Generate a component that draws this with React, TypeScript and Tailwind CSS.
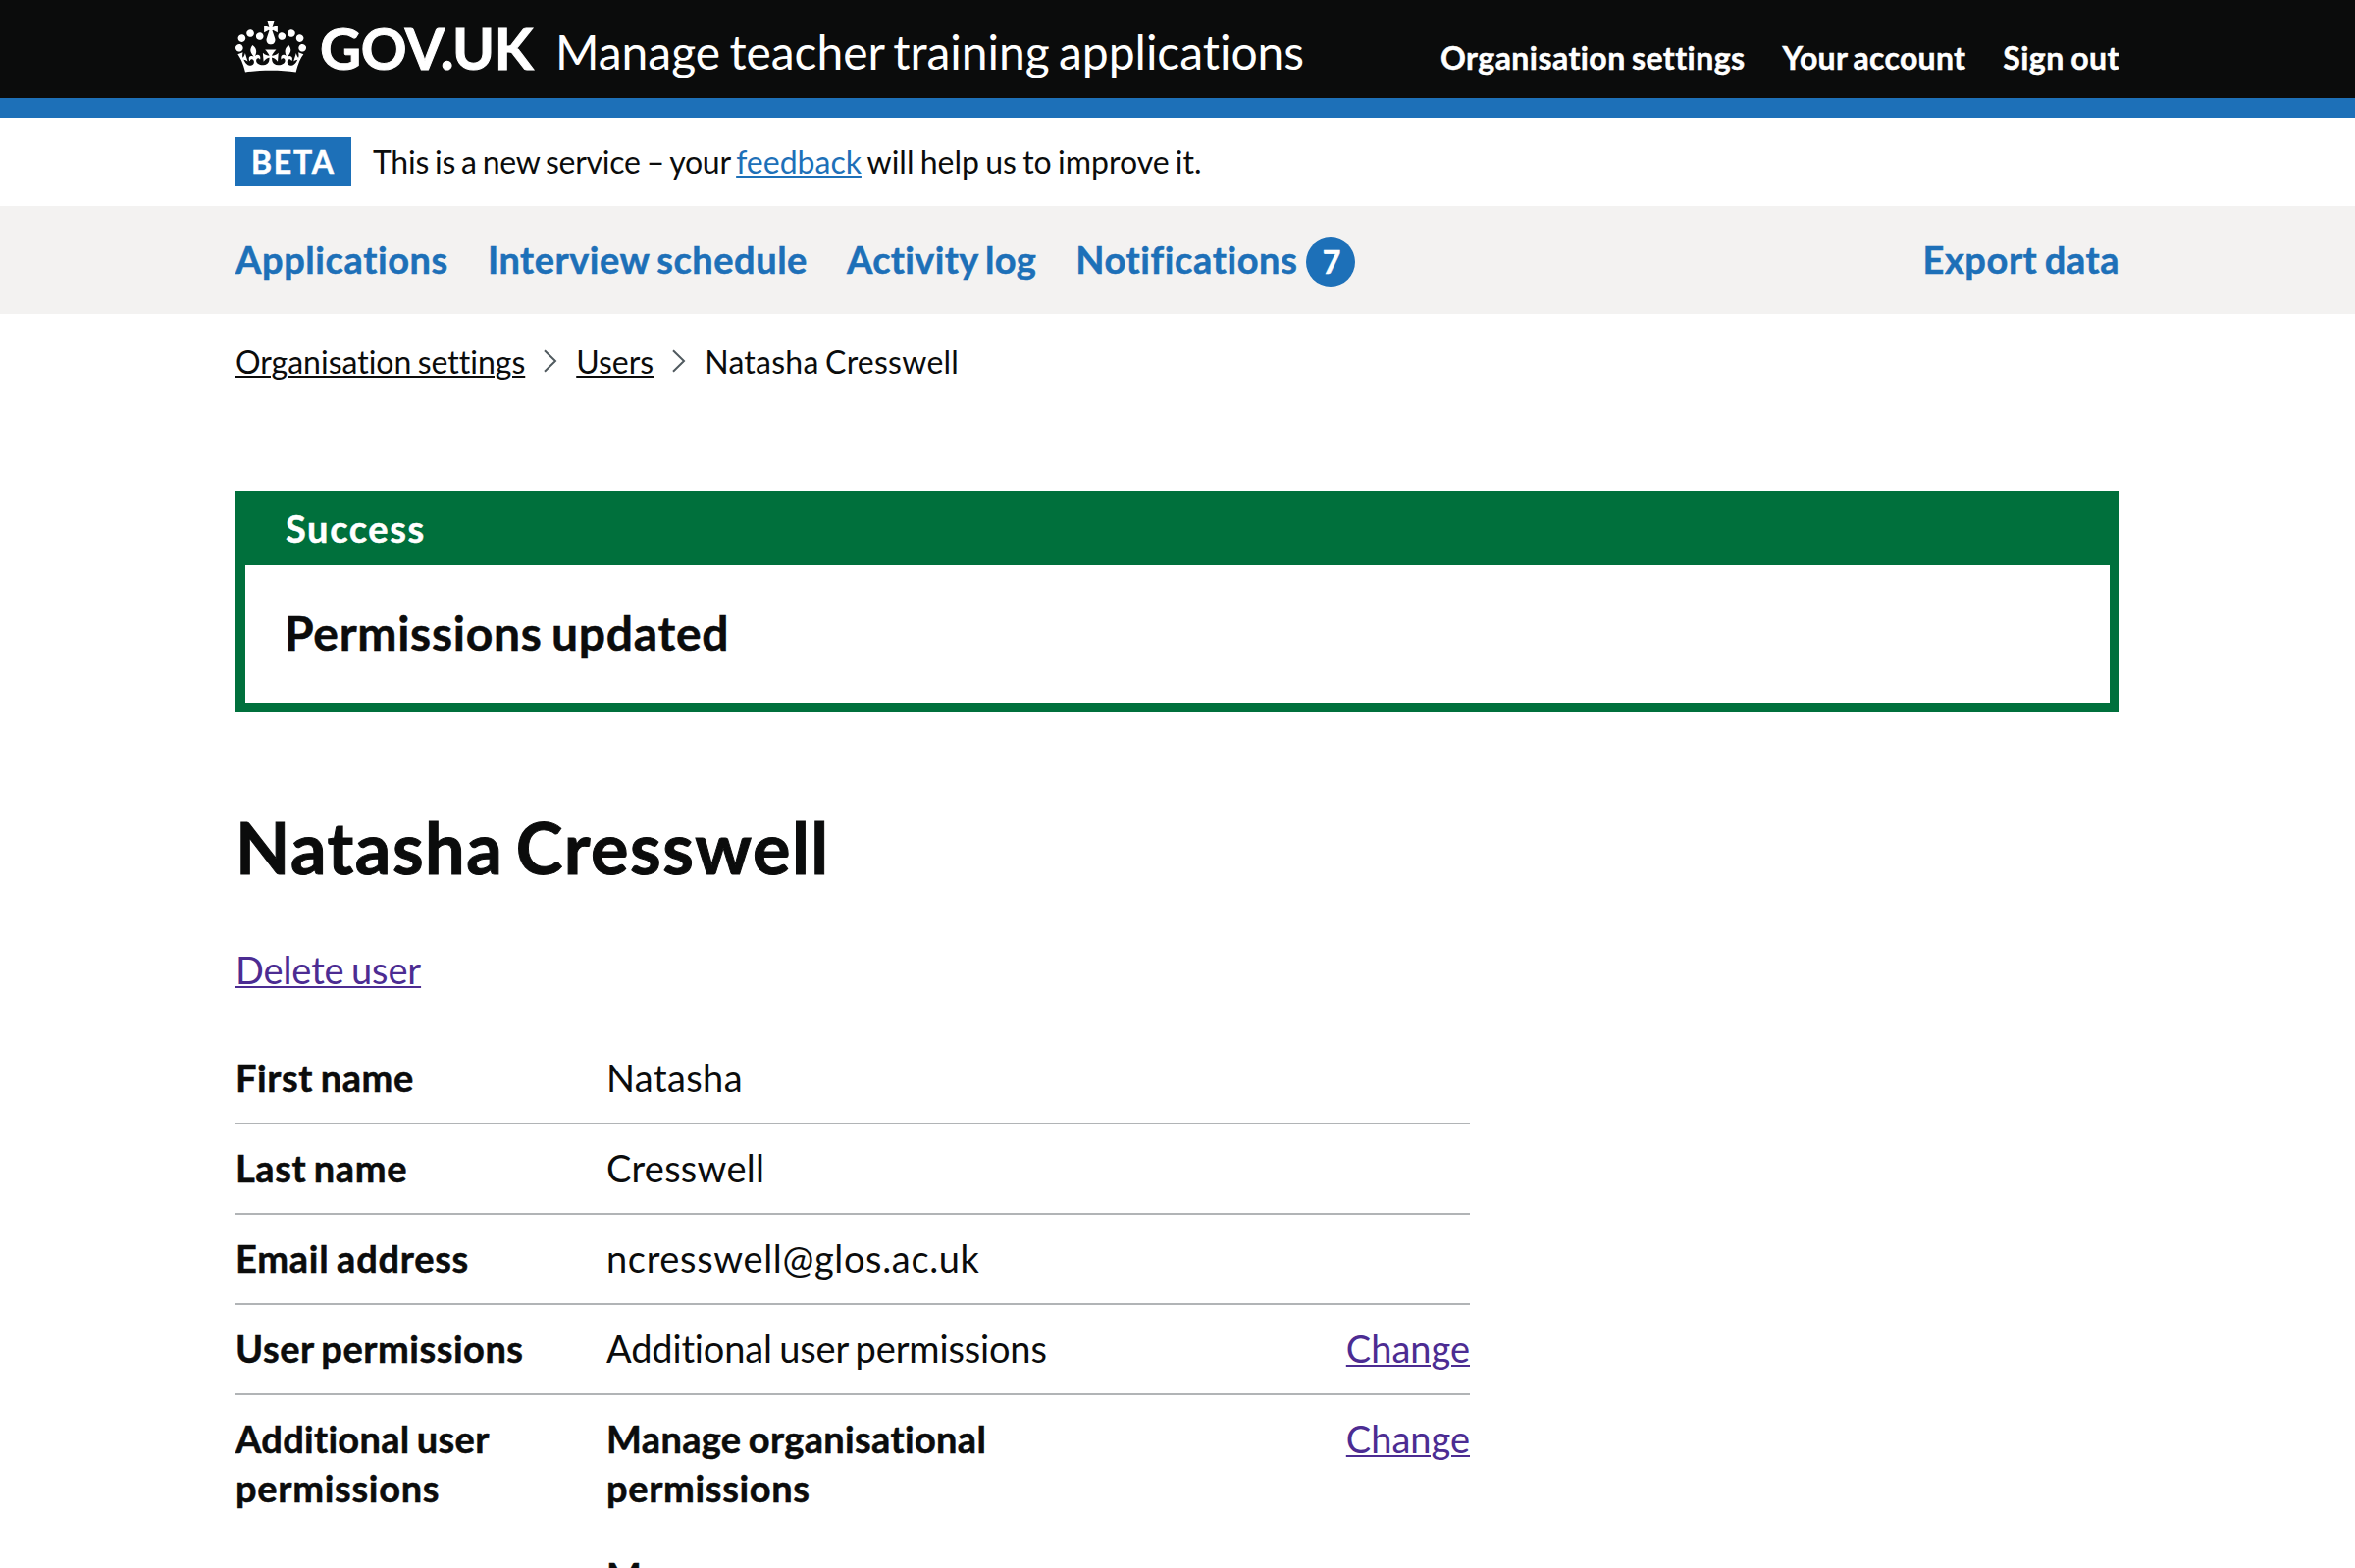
import React from "react";

const CROWN =
  "M25 30.2c3.5 1.5 7.7-.2 9.1-3.7 1.5-3.6-.2-7.8-3.9-9.2-3.6-1.4-7.6.3-9.1 3.9-1.4 3.5.3 7.5 3.9 9zM9 39.5c3.6 1.5 7.8-.2 9.2-3.7 1.5-3.6-.2-7.8-3.9-9.1-3.6-1.5-7.6.2-9.1 3.8-1.4 3.5.3 7.5 3.8 9zM4.4 57.2c3.5 1.5 7.7-.2 9.1-3.8 1.5-3.6-.2-7.7-3.9-9.1-3.5-1.5-7.6.3-9.1 3.8-1.4 3.5.3 7.6 3.9 9.1zm38.3-21.4c3.5 1.5 7.7-.2 9.1-3.8 1.5-3.6-.2-7.7-3.9-9.1-3.6-1.5-7.6.3-9.1 3.8-1.3 3.6.4 7.7 3.9 9.1zm64.4-5.6c-3.6 1.5-7.8-.2-9.1-3.7-1.5-3.6.2-7.8 3.8-9.2 3.6-1.4 7.7.3 9.2 3.9 1.3 3.5-.4 7.5-3.9 9zm15.9 9.3c-3.6 1.5-7.7-.2-9.1-3.7-1.5-3.6.2-7.8 3.7-9.1 3.6-1.5 7.7.2 9.2 3.8 1.5 3.5-.3 7.5-3.8 9zm4.7 17.7c-3.6 1.5-7.8-.2-9.2-3.8-1.5-3.6.2-7.7 3.9-9.1 3.6-1.5 7.7.3 9.2 3.8 1.3 3.5-.4 7.6-3.9 9.1zM89.3 35.8c-3.6 1.5-7.8-.2-9.2-3.8-1.4-3.6.2-7.7 3.9-9.1 3.6-1.5 7.7.3 9.2 3.8 1.4 3.6-.3 7.7-3.9 9.1zM69.7 17.7l8.9 4.7V9.3l-8.9 2.8c-.2-.3-.5-.6-.9-.9L72.4 0H59.6l3.5 11.2c-.3.3-.6.5-.9.9l-8.8-2.8v13.1l8.8-4.7c.3.3.6.7.9.9l-5 15.4v.1c-.2.8-.4 1.6-.4 2.4 0 4.1 3.1 7.5 7 8.1h.2c.3 0 .7.1 1 .1.4 0 .7 0 1-.1h.2c4-.6 7.1-4.1 7.1-8.1 0-.8-.1-1.7-.4-2.4V34l-5.1-15.4c.4-.2.7-.6 1-.9zM66 92.8c16.9 0 32.8 1.1 47.1 3.2 4-16.9 8.9-26.7 14-33.5l-9.6-3.4c1 4.9 1.1 7.2 0 10.2-1.5-1.4-3-4.3-4.2-8.7L108.6 76c2.8-2 5-3.2 7.5-3.3-4.4 9.4-10 11.9-13.6 11.2-4.3-.8-6.3-4.6-5.6-7.9 1-4.7 5.7-5.9 8-.5 4.3-8.7-3-11.4-7.6-8.8 7.1-7.2 7.9-13.5 2.1-21.1-8 6.1-8.1 12.3-4.5 20.8-4.7-5.4-12.1-2.5-9.5 6.2 3.4-5.2 7.9-2 7.2 3.1-.6 4.3-6.4 7.8-13.5 7.2-10.3-.9-10.9-8-11.2-13.8 2.5-.5 7.1 1.8 11 7.3L80.2 60c-4.1 4.4-8 5.3-12.3 5.4 1.4-4.4 8-11.6 8-11.6H55.5s6.4 7.2 7.9 11.6c-4.2-.1-8-1-12.3-5.4l1.4 16.4c3.9-5.5 8.5-7.7 10.9-7.3-.3 5.8-.9 12.8-11.1 13.8-7.2.6-12.9-2.9-13.5-7.2-.7-5 3.8-8.3 7.1-3.1 2.7-8.7-4.6-11.6-9.4-6.2 3.7-8.5 3.6-14.7-4.6-20.8-5.8 7.6-5 13.9 2.2 21.1-4.7-2.6-11.9.1-7.7 8.8 2.3-5.5 7.1-4.2 8.1.5.7 3.3-1.3 7.1-5.7 7.9-3.5.7-9-1.8-13.5-11.2 2.5.1 4.7 1.3 7.5 3.3l-4.7-15.4c-1.2 4.4-2.7 7.2-4.3 8.7-1.1-3-.9-5.3 0-10.2l-9.5 3.4c5 6.9 9.9 16.7 14 33.5 14.8-2.1 30.8-3.2 47.7-3.2z";

const BOLD = "font-bold [-webkit-text-stroke:0.5px_currentColor]";
const LINK = "underline decoration-2 underline-offset-[2px]";

function Chevron() {
  return (
    <svg viewBox="0 0 14 24" className="-mt-[2px] ml-[19px] mr-[19px] h-6 w-[14px] shrink-0" fill="none" stroke="#505a5f" strokeWidth="2">
      <path d="M1 1.2 12 12 1 22.8" />
    </svg>
  );
}

function Row({ label, children, change }: { label: React.ReactNode; children: React.ReactNode; change?: boolean }) {
  return (
    <div className="flex border-b-2 border-[#b1b4b6] pt-[19px] pb-[21px]">
      <dt className={`w-[378px] shrink-0 pr-10 ${BOLD}`}>{label}</dt>
      <dd className="w-[560px]">{children}</dd>
      {change && (
        <dd className="ml-auto">
          <a className={`text-[#4c2c92] ${LINK}`}>Change</a>
        </dd>
      )}
    </div>
  );
}

export default function App() {
  return (
    <div className="h-[1598px] overflow-hidden bg-white font-['Lato','Noto_Sans',sans-serif] text-[38px] leading-[50px] text-[#0b0c0c] antialiased [font-variant-ligatures:none] [&_*]:[word-spacing:-0.06em]">
      <header className="h-[120px] border-b-[20px] border-[#1d70b8] bg-[#0b0c0c] text-white">
        <div className="mx-auto flex w-[1920px] items-baseline pt-5">
          <svg viewBox="0 0 132 97" className="mt-px h-[53px] w-[72px] shrink-0 self-start" fill="currentColor">
            <path d={CROWN} />
          </svg>
          <span className="ml-[14px] w-[240px] text-[58px] leading-[58px] font-bold tracking-[-0.4px] [-webkit-text-stroke:1px_currentColor]">GOV.UK</span>
          <span className="text-[48px] leading-[58px] tracking-[-0.04px]">Manage teacher training applications</span>
          <nav className={`ml-auto flex gap-[38px] text-[32px] leading-[40px] ${BOLD}`}>
            <a className="tracking-[0.45px]">Organisation settings</a>
            <a className="tracking-[0.28px]">Your account</a>
            <a className="tracking-[0.5px]">Sign out</a>
          </nav>
        </div>
      </header>

      <div className="mx-auto flex h-[90px] w-[1920px] items-start pt-5 text-[32px] leading-[49px]">
        <strong className={`h-[50px] w-[118px] bg-[#1d70b8] pl-4 tracking-[1.8px] text-white ${BOLD}`}>BETA</strong>
        <p className="ml-[22px] tracking-[-0.26px]">
          This is a new service – your <a className={`tracking-[0px] text-[#1d70b8] ${LINK}`}>feedback</a>
          <span className="tracking-[0px]"> will help us to improve it.</span>
        </p>
      </div>

      <div className="bg-[#f3f2f1]">
        <nav className={`mx-auto flex h-[110px] w-[1920px] gap-10 pt-[29px] text-[#1d70b8] ${BOLD}`}>
          <a className="tracking-[0.6px]">Applications</a>
          <a className="tracking-[0.53px]">Interview schedule</a>
          <a className="tracking-[0.35px]">Activity log</a>
          <a className="flex tracking-[0.61px]">
            Notifications
            <span className="mt-[3px] ml-[9px] size-[50px] rounded-full bg-[#1d70b8] pl-px text-center text-[32px] leading-[49px] tracking-normal text-white">7</span>
          </a>
          <a className="ml-auto tracking-[0.55px]">Export data</a>
        </nav>
      </div>

      <main className="mx-auto w-[1920px]">
        <nav className="flex items-center pt-[29px] text-[32px] leading-[40px]">
          <a className={LINK}>Organisation settings</a>
          <Chevron />
          <a className={LINK}>Users</a>
          <Chevron />
          <span className="tracking-[0.25px]">Natasha Cresswell</span>
        </nav>

        <section className="mt-[111px] h-[226px] border-[10px] border-[#00703c] bg-white">
          <div className={`h-[66px] bg-[#00703c] pt-[3px] pl-[41px] tracking-[1.6px] text-white ${BOLD}`}>Success</div>
          <p className={`pt-[39px] pl-10 text-[48px] leading-[60px] tracking-[0.72px] ${BOLD}`}>Permissions updated</p>
        </section>

        <h1 className="mt-[97px] text-[72px] leading-[80px] font-bold tracking-[1.5px] [word-spacing:-0.09em]! [-webkit-text-stroke:1px_currentColor]">
          Natasha Cresswell
        </h1>
        <p className="mt-[60px]">
          <a className={`tracking-[-0.1px] text-[#4c2c92] ${LINK}`}>Delete user</a>
        </p>

        <dl className="mt-[41px] w-[1258px]">
          <Row label={<span className="tracking-[0.6px]">First name</span>}>
            <span className="tracking-[0.4px]">Natasha</span>
          </Row>
          <Row label={<span className="tracking-[0.6px]">Last name</span>}>
            <span className="tracking-[0.25px]">Cresswell</span>
          </Row>
          <Row label={<span className="tracking-[0.75px]">Email address</span>}>
            <span className="tracking-[0.65px]">ncresswell@glos.ac.uk</span>
          </Row>
          <Row change label={<span className="tracking-[0.52px]">User permissions</span>}>
            <span className="tracking-[-0.15px]">Additional user permissions</span>
          </Row>
          <Row
            change
            label={
              <>
                <span className="tracking-[0.3px]">Additional user</span> <span className="tracking-[0.7px]">permissions</span>
              </>
            }
          >
            <div className={BOLD}>
              <p className="tracking-[0.34px]">
                Manage organisational
                <br />
                <span className="tracking-[0.65px]">permissions</span>
              </p>
              <p className="mt-10">Manage users</p>
            </div>
          </Row>
        </dl>
      </main>
    </div>
  );
}
